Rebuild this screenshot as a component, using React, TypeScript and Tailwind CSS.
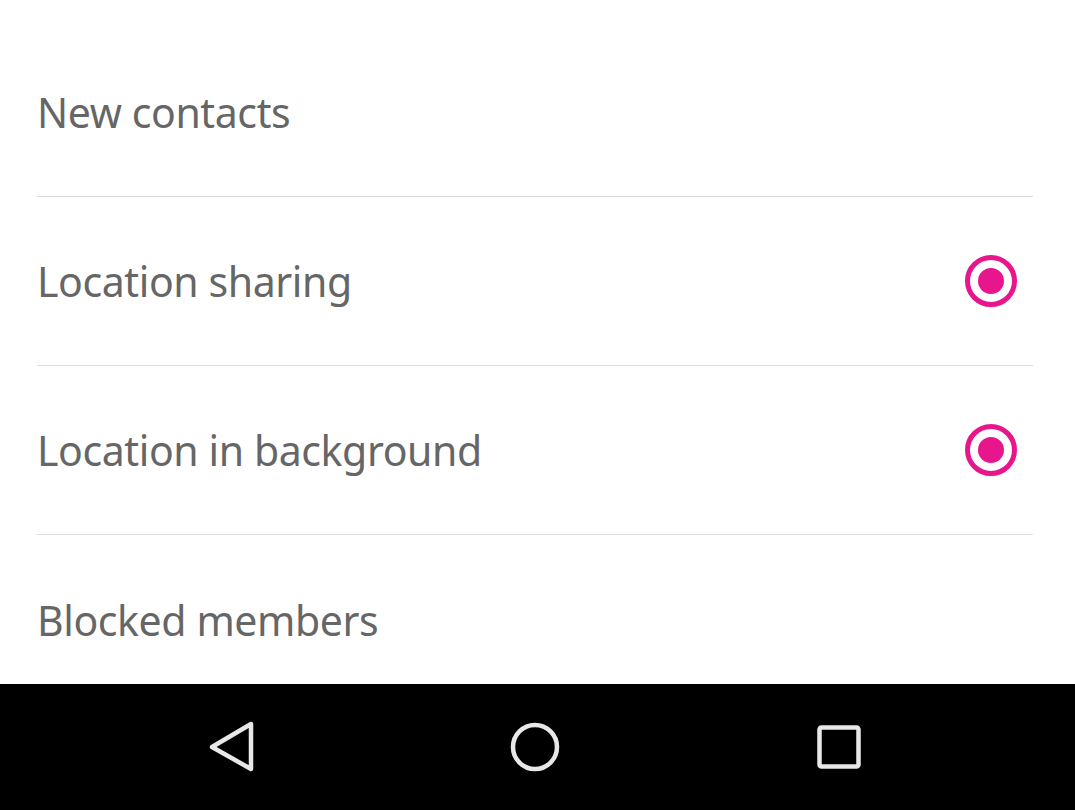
import React from "react";

function Radio() {
  return (
    <svg width="56" height="56" viewBox="0 0 56 56" className="mr-[14px]">
      <circle cx="28" cy="28" r="23.5" fill="none" stroke="#e8168c" strokeWidth="5" />
      <circle cx="28" cy="28" r="13" fill="#e8168c" />
    </svg>
  );
}

function Row({ label, radio, last }: { label: string; radio?: boolean; last?: boolean }) {
  return (
    <div className={`h-[169px] shrink-0 flex items-center justify-between ${last ? "" : "border-b border-[#dcdcdc]"}`}>
      <span className="text-[41px] text-[#666666] tracking-[-0.4px] pt-[2px]" style={{ fontFamily: '"Noto Sans", sans-serif' }}>
        {label}
      </span>
      {radio && <Radio />}
    </div>
  );
}

export default function App() {
  return (
    <div className="w-[1075px] h-[810px] flex flex-col bg-white overflow-hidden">
      <div className="h-[684px] overflow-hidden pt-[28px] pl-[37px] pr-[42px] flex flex-col">
        <Row label="New contacts" />
        <Row label="Location sharing" radio />
        <Row label="Location in background" radio />
        <Row label="Blocked members" last />
      </div>
      <div className="h-[126px] bg-black flex items-center justify-center gap-[244px] pr-[5px]">
        <svg width="60" height="60" viewBox="0 0 60 60">
          <path d="M50 7 L50 52 L11 30 Z" fill="none" stroke="#e8e8e8" strokeWidth="4.5" strokeLinejoin="round" />
        </svg>
        <svg width="60" height="60" viewBox="0 0 60 60">
          <circle cx="30" cy="30" r="22" fill="none" stroke="#e8e8e8" strokeWidth="4.5" />
        </svg>
        <svg width="60" height="60" viewBox="0 0 60 60">
          <rect x="10.5" y="10.5" width="39" height="39" rx="2" fill="none" stroke="#e8e8e8" strokeWidth="4.5" />
        </svg>
      </div>
    </div>
  );
}
